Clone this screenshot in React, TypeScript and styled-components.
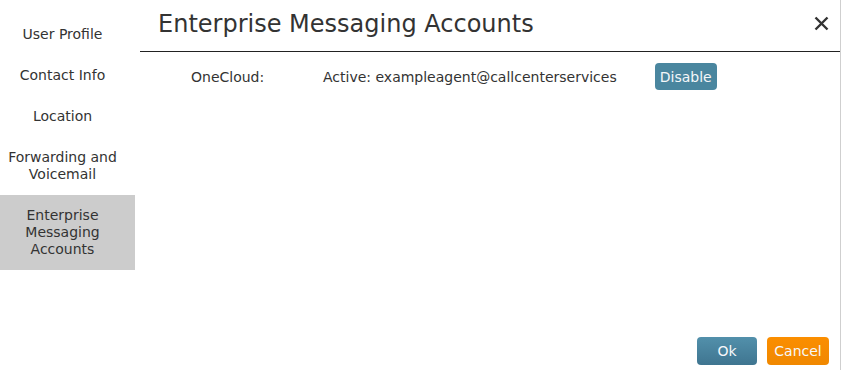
import React from "react";
import styled, { createGlobalStyle } from "styled-components";

const GlobalStyle = createGlobalStyle`
  html, body {
    margin: 0;
    padding: 0;
    background: #ffffff;
    font-family: "DejaVu Sans", Verdana, sans-serif;
    color: #333333;
  }
  * { box-sizing: border-box; }
`;

const Shell = styled.div`
  display: flex;
  width: 841px;
  height: 370px;
  overflow: hidden;
`;

const Sidebar = styled.nav`
  width: 135px;
  flex: none;
  padding-top: 14px;
  display: flex;
  flex-direction: column;
`;

const NavItem = styled.div<{ $active?: boolean }>`
  padding: 12px 10px 12px 0;
  font-size: 14px;
  line-height: 17px;
  text-align: center;
  color: #333333;
  background: ${(p) => (p.$active ? "#cccccc" : "transparent")};
`;

const Main = styled.section`
  margin-left: 5px;
  width: 701px;
  flex: none;
  border-right: 1px solid #cfcfcf;
  display: flex;
  flex-direction: column;
`;

const Header = styled.header`
  height: 52px;
  border-bottom: 1px solid #222222;
  display: flex;
  align-items: center;
  justify-content: space-between;
  padding: 0 10px 4px 18px;
`;

const Title = styled.h1`
  margin: 0;
  font-size: 24px;
  font-weight: normal;
  color: #333333;
`;

const CloseButton = styled.button`
  border: none;
  background: none;
  padding: 0;
  width: 18px;
  height: 18px;
  display: flex;
  align-items: center;
  justify-content: center;
  cursor: pointer;
`;

const Body = styled.div`
  flex: 1;
  padding: 11px 0 0 51px;
`;

const AccountRow = styled.div`
  display: flex;
  align-items: center;
  font-size: 14px;
  color: #333333;
`;

const Label = styled.span`
  width: 132px;
  flex: none;
`;

const Value = styled.span`
  flex: none;
`;

const SmallButton = styled.button`
  margin-left: 38px;
  height: 27px;
  width: 62px;
  padding: 0;
  border: none;
  border-radius: 4px;
  background: #4a869f;
  color: #f4f7f9;
  font-family: "DejaVu Sans", Verdana, sans-serif;
  font-size: 14px;
`;

const Footer = styled.footer`
  display: flex;
  justify-content: flex-end;
  gap: 10px;
  padding: 0 11px 5px 0;
`;

const ActionButton = styled.button<{ $variant: "primary" | "cancel" }>`
  height: 28px;
  width: ${(p) => (p.$variant === "primary" ? "60px" : "62px")};
  padding: 0;
  border: none;
  border-radius: 4px;
  color: #f6f8fa;
  font-family: "DejaVu Sans", Verdana, sans-serif;
  font-size: 14px;
  background: ${(p) =>
    p.$variant === "primary"
      ? "linear-gradient(#5290ab, #3f7590)"
      : "linear-gradient(#fb8e00, #f08800)"};
`;

const navItems = [
  "User Profile",
  "Contact Info",
  "Location",
  "Forwarding and Voicemail",
  "Enterprise Messaging Accounts",
];

export default function App() {
  return (
    <>
      <GlobalStyle />
      <Shell>
        <Sidebar>
          {navItems.map((n) => (
            <NavItem key={n} $active={n === "Enterprise Messaging Accounts"}>
              {n}
            </NavItem>
          ))}
        </Sidebar>
        <Main>
          <Header>
            <Title>Enterprise Messaging Accounts</Title>
            <CloseButton aria-label="Close">
              <svg width="15" height="15" viewBox="0 0 15 15">
                <path
                  d="M1.5 1.5 L13.5 13.5 M13.5 1.5 L1.5 13.5"
                  stroke="#333"
                  strokeWidth="2.4"
                  strokeLinecap="butt"
                />
              </svg>
            </CloseButton>
          </Header>
          <Body>
            <AccountRow>
              <Label>OneCloud:</Label>
              <Value>Active: exampleagent@callcenterservices</Value>
              <SmallButton>Disable</SmallButton>
            </AccountRow>
          </Body>
          <Footer>
            <ActionButton $variant="primary">Ok</ActionButton>
            <ActionButton $variant="cancel">Cancel</ActionButton>
          </Footer>
        </Main>
      </Shell>
    </>
  );
}
